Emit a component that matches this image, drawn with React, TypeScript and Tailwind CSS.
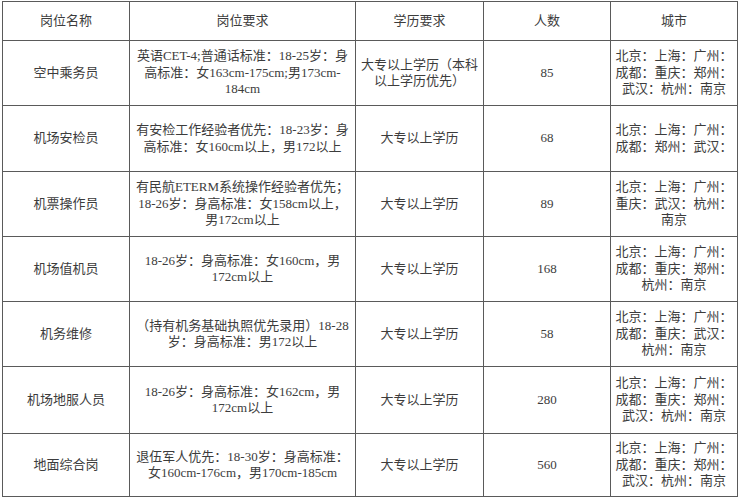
import React from "react";

type Row = {
    name: string;
    req: string[];
    edu: string[];
    count: string;
    cities: string[];
    h: string;
};

const allCities = ["北京：上海：广州：", "成都：重庆：郑州：", "武汉：杭州：南京"];

const rows: Row[] = [
    {
        name: "空中乘务员",
        req: ["英语CET-4;普通话标准：18-25岁：身", "高标准：女163cm-175cm;男173cm-", "184cm"],
        edu: ["大专以上学历（本科", "以上学历优先）"],
        count: "85",
        cities: allCities,
        h: "h-[64px]",
    },
    {
        name: "机场安检员",
        req: ["有安检工作经验者优先：18-23岁：身", "高标准：女160cm以上，男172以上"],
        edu: ["大专以上学历"],
        count: "68",
        cities: ["北京：上海：广州：", "成都：郑州：武汉："],
        h: "h-[65px]",
    },
    {
        name: "机票操作员",
        req: ["有民航ETERM系统操作经验者优先；", "18-26岁：身高标准：女158cm以上，", "男172cm以上"],
        edu: ["大专以上学历"],
        count: "89",
        cities: ["北京：上海：广州：", "重庆：武汉：杭州：", "南京"],
        h: "h-[64px]",
    },
    {
        name: "机场值机员",
        req: ["18-26岁：身高标准：女160cm，男", "172cm以上"],
        edu: ["大专以上学历"],
        count: "168",
        cities: ["北京：上海：广州：", "成都：重庆：郑州：", "杭州：南京"],
        h: "h-[64px]",
    },
    {
        name: "机务维修",
        req: ["（持有机务基础执照优先录用）18-28", "岁：身高标准：男172以上"],
        edu: ["大专以上学历"],
        count: "58",
        cities: ["北京：上海：广州：", "成都：重庆：武汉：", "杭州：南京"],
        h: "h-[64px]",
    },
    {
        name: "机场地服人员",
        req: ["18-26岁：身高标准：女162cm，男", "172cm以上"],
        edu: ["大专以上学历"],
        count: "280",
        cities: allCities,
        h: "h-[66px]",
    },
    {
        name: "地面综合岗",
        req: ["退伍军人优先：18-30岁：身高标准：", "女160cm-176cm，男170cm-185cm"],
        edu: ["大专以上学历"],
        count: "560",
        cities: allCities,
        h: "h-[62px]",
    },
];

const Cell = ({ lines, h }: { lines: string[]; h: string }) => (
    <div className={`${h} bg-white flex flex-col items-center justify-center text-center`}>
        {lines.map((l, i) => (
            <div key={i} className="whitespace-nowrap">
                {l}
            </div>
        ))}
    </div>
);

const App = () => {
    const headers = ["岗位名称", "岗位要求", "学历要求", "人数", "城市"];
    return (
        <div className="w-[740px] h-[501px] bg-white pt-px pl-[2px]">
            <div
                className="grid grid-cols-[126px_225px_127px_126px_126px] gap-px bg-[#5a5a5a] p-px w-[736px] text-[13px] leading-[16.5px] text-[#3c3c3c]"
                style={{ fontFamily: '"Liberation Serif", "Noto Sans CJK SC", serif' }}
            >
                {headers.map((t) => (
                    <Cell key={t} lines={[t]} h="h-[38px]" />
                ))}
                {rows.map((r) => (
                    <React.Fragment key={r.name}>
                        <Cell lines={[r.name]} h={r.h} />
                        <Cell lines={r.req} h={r.h} />
                        <Cell lines={r.edu} h={r.h} />
                        <Cell lines={[r.count]} h={r.h} />
                        <Cell lines={r.cities} h={r.h} />
                    </React.Fragment>
                ))}
            </div>
        </div>
    );
};

export default App;
